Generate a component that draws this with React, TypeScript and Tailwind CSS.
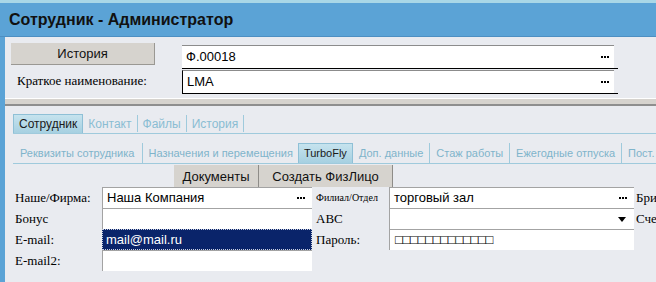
import React from "react";

const sans = { fontFamily: '"Liberation Sans", Arial, sans-serif' };
const serif = { fontFamily: '"Liberation Serif", "Times New Roman", serif' };

function Dots({ right = 5 }: { right?: number }) {
  return (
    <span className="ml-auto flex gap-[1px]" style={{ marginRight: right }}>
      <span className="w-[2px] h-[2px] bg-black" />
      <span className="w-[2px] h-[2px] bg-black" />
      <span className="w-[2px] h-[2px] bg-black" />
    </span>
  );
}

const mainTabs = ["Контакт", "Файлы", "История"];
const subTabsRight = ["Доп. данные", "Стаж работы", "Ежегодные отпуска", "Пост. начисления"];

export default function App() {
  return (
    <div className="w-[656px] h-[282px] overflow-hidden bg-[#e9ebf0]" style={sans}>
      {/* Title */}
      <div className="h-[3px] bg-[#a9d7e7]" />
      <div className="h-[34px] bg-[#5ba3d6] border-b border-[#4d8fc2] flex items-center pl-[9px]">
        <span className="text-[16px] font-bold text-[#111]">Сотрудник - Администратор</span>
      </div>

      <div className="h-[245px] border-l-[5px] border-[#5ba3d6] flex flex-col">
        {/* Header fields */}
        <div className="pt-[6px] flex flex-col">
          <div className="flex items-start h-[26px]">
            <button
              type="button"
              className="ml-[6px] w-[144px] h-[22px] bg-[#d6d3ce] border-b border-r border-[#9a9893] text-[13px] text-[#111] leading-none"
            >
              История
            </button>
            <div className="ml-[27px] mt-[2px] flex flex-col">
              <div className="w-[432px] h-[23px] bg-white border-t border-[#8c8c8c] flex items-center pl-[4px] text-[13px] text-black">
                Ф.00018
                <Dots right={5} />
              </div>
              <div className="w-[436px] h-px bg-black" />
            </div>
          </div>
          <div className="flex items-start h-[26px]">
            <span className="ml-[12px] w-[165px] h-[24px] flex items-center text-[13px] text-black" style={serif}>
              Краткое наименование:
            </span>
            <div className="flex flex-col mt-px">
              <div className="w-[432px] h-[23px] bg-white border-t border-[#8c8c8c] border-l border-l-black flex items-center pl-[4px] text-[13px] text-black">
                LMA
                <Dots right={5} />
              </div>
              <div className="w-[436px] h-px bg-black" />
            </div>
          </div>
        </div>

        {/* Separator */}
        <div className="mt-[3px] h-px bg-white" />
        <div className="h-[5px] bg-[#d6d3ce]" />
        <div className="h-[2px] bg-[#8e8e8e]" />

        {/* Main tabs */}
        <div className="mt-[8px] ml-[8px] h-[20px] flex items-stretch border-b border-[#9fcadc] text-[12px]">
          <div className="px-[5px] flex items-center bg-gradient-to-b from-[#c6e3ee] to-[#a6d0e1] border-t border-l border-r border-[#8fc0d6] text-[#1a1a1a]">
            Сотрудник
          </div>
          {mainTabs.map((t) => (
            <div key={t} className="px-[5px] flex items-center border-r border-[#9fcadc] text-[#8abdd3] my-[1px]">
              {t}
            </div>
          ))}
        </div>

        {/* Sub tabs */}
        <div className="mt-[9px] ml-[8px] h-[21px] flex items-stretch border-b border-[#9fcadc] text-[11px] whitespace-nowrap">
          <div className="pl-[7px] pr-[8px] flex items-center border-r border-[#9fcadc] text-[#7fb4cb]">
            Реквизиты сотрудника
          </div>
          <div className="pl-[5px] pr-[5px] flex items-center text-[#7fb4cb]">Назначения и перемещения</div>
          <div className="px-[5px] flex items-center bg-gradient-to-b from-[#c6e3ee] to-[#a6d0e1] border-t border-l border-r border-[#8fc0d6] text-[#1a1a1a]">
            TurboFly
          </div>
          {subTabsRight.map((t) => (
            <div key={t} className="px-[6px] flex items-center border-r border-[#9fcadc] text-[#7fb4cb]">
              {t}
            </div>
          ))}
        </div>

        {/* Actions */}
        <div className="mt-[1px] ml-[169px] flex h-[22px] text-[13px] text-[#111]">
          <button type="button" className="w-[85px] h-full bg-[#d6d3ce] border-r border-[#8e8c88] leading-none">
            Документы
          </button>
          <button type="button" className="w-[134px] h-full bg-[#d6d3ce] border-r border-[#8e8c88] leading-none">
            Создать ФизЛицо
          </button>
        </div>

        {/* Form */}
        <div className="grid grid-cols-[97px_210px_77px_245px_22px] grid-rows-[21px_21px_21px_21px] text-[13px] text-black whitespace-nowrap">
          <span className="pl-[10px] flex items-center" style={serif}>Наше/Фирма:</span>
          <div className="bg-white border-t border-l border-[#a3a3a3] flex items-center pl-[4px]">
            Наша Компания
            <Dots right={7} />
          </div>
          <span className="pl-[4px] flex items-center text-[10px]" style={serif}>Филиал/Отдел</span>
          <div className="bg-white border-t border-l border-[#a3a3a3] flex items-center pl-[4px]">
            торговый зал
            <Dots right={7} />
          </div>
          <span className="pl-[2px] flex items-center overflow-hidden" style={serif}>Бригада:</span>

          <span className="pl-[10px] flex items-center" style={serif}>Бонус</span>
          <div className="bg-white border-t border-l border-[#a3a3a3]" />
          <span className="pl-[4px] flex items-center" style={serif}>ABC</span>
          <div className="bg-white border-t border-l border-[#a3a3a3] flex items-center justify-end pr-[8px]">
            <svg width="8" height="5" viewBox="0 0 8 5">
              <path d="M0 0H8L4 5Z" fill="#000" />
            </svg>
          </div>
          <span className="pl-[2px] flex items-center overflow-hidden" style={serif}>Счет:</span>

          <span className="pl-[10px] flex items-center" style={serif}>E-mail:</span>
          <div className="bg-[#0a246a] border border-dotted border-[#c9cfe0] flex items-center pl-[3px] text-white">
            mail@mail.ru
          </div>
          <span className="pl-[4px] flex items-center" style={serif}>Пароль:</span>
          <div className="bg-white border-t border-l border-[#a3a3a3] flex items-center pl-[5px] tracking-[-0.3px]">
            □□□□□□□□□□□□□
          </div>
          <span />

          <span className="pl-[10px] flex items-center" style={serif}>E-mail2:</span>
          <div className="bg-white border-t border-l border-[#a3a3a3]" />
          <span />
          <span />
          <span />
        </div>
      </div>
    </div>
  );
}
